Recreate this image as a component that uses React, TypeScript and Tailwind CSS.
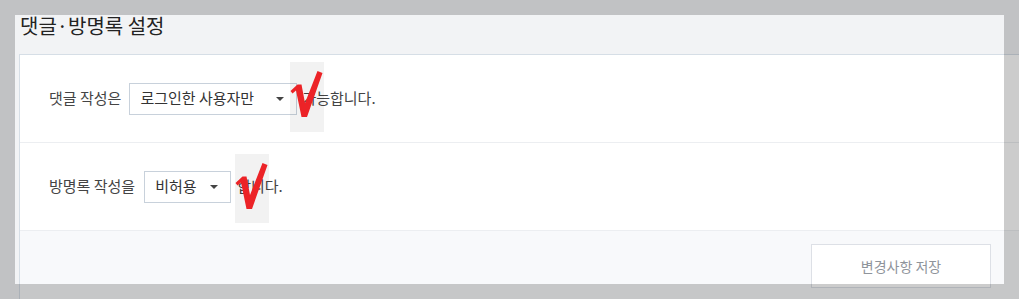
import React from "react";

const font = { fontFamily: '"Noto Sans CJK KR", "Noto Sans", sans-serif' };

function Check() {
  return (
    <svg width="34" height="70" viewBox="0 0 34 70">
      <path d="M0.5 29 L7.5 22.5 L11.5 22.5 L15 41 L27.5 9 L32.5 11 L17 55 L11.5 55 L6 28.5 L2.5 31.5 Z" fill="#ec2327" />
    </svg>
  );
}

function Caret() {
  return (
    <svg width="8" height="4" viewBox="0 0 8 4" className="ml-auto">
      <path d="M0 0 L8 0 L4 4 Z" fill="#444" />
    </svg>
  );
}

export default function App() {
  return (
    <div className="relative w-[1019px] h-[299px] overflow-hidden bg-[#f2f3f5]" style={font}>
      <div className="h-[54px] pl-[20px] pt-[12px] text-[20px] leading-[28px] text-[#222]">댓글·방명록 설정</div>
      <div className="ml-[19px] w-[1000px] border-l border-t border-[#d6dee6] bg-white">
        <div className="h-[88px] border-b border-[#eceef1] pl-[29px] flex items-center text-[15px] text-[#444]">
          <span>댓글 작성은</span>
          <div className="ml-[8px] w-[168px] h-[32px] border border-[#c8d1db] flex items-center pl-[10px] pr-[12px] text-[#333]">
            <span>로그인한 사용자만</span>
            <Caret />
          </div>
          <span className="ml-[5px]">가능합니다.</span>
        </div>
        <div className="h-[88px] border-b border-[#eceef1] pl-[29px] flex items-center text-[15px] text-[#444]">
          <span>방명록 작성을</span>
          <div className="ml-[9px] w-[87px] h-[32px] border border-[#c8d1db] flex items-center pl-[10px] pr-[12px] text-[#333]">
            <span>비허용</span>
            <Caret />
          </div>
          <span className="ml-[6px]">합니다.</span>
        </div>
        <div className="h-[80px] bg-[#f8f9fb] flex justify-end pr-[28px] pt-[13px]">
          <button className="w-[180px] h-[44px] border border-[#dde0e6] bg-white text-[14px] text-[#8f949b]" style={font}>
            변경사항 저장
          </button>
        </div>
      </div>
      <div className="absolute left-[290px] top-[62px] w-[34px] h-[70px] bg-[rgba(0,0,0,0.05)]">
        <Check />
      </div>
      <div className="absolute left-[235px] top-[154px] w-[34px] h-[69px] bg-[rgba(0,0,0,0.05)]">
        <Check />
      </div>
      <div className="absolute left-[15px] top-[15px] w-[989px] h-[269px] shadow-[0_0_0_2000px_rgba(0,0,0,0.2)] pointer-events-none" />
    </div>
  );
}
